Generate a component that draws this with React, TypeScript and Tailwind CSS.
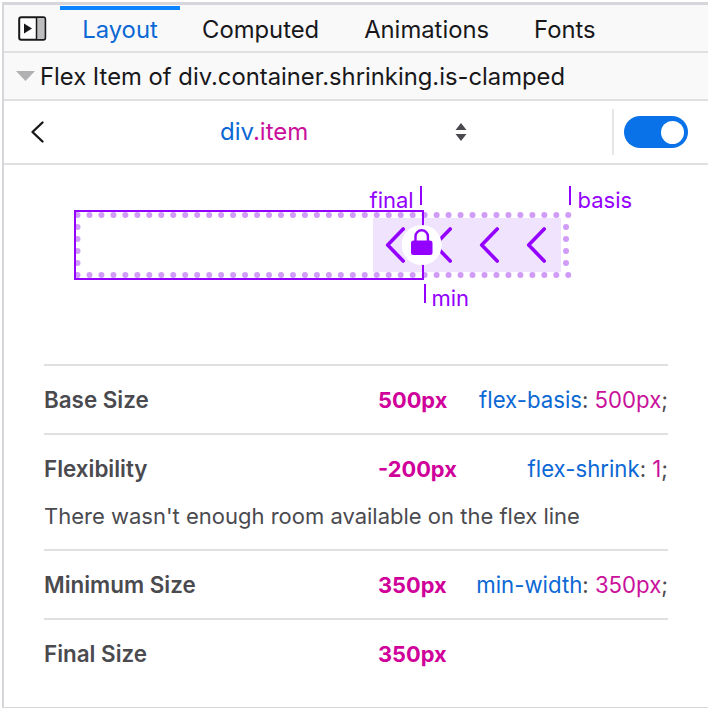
const font = { fontFamily: "Inter, 'Liberation Sans', sans-serif" };

function Prop({ name, value }: { name: string; value: string }) {
  return (
    <span className="ml-auto text-[22.2px] text-[#4a4a4f]">
      <span className="text-[#0b68d4]">{name}</span>: <span className="text-[#c9119b]">{value}</span>;
    </span>
  );
}

function Row({ label, value, prop, border = true }: { label: string; value: string; prop?: [string, string]; border?: boolean }) {
  return (
    <div className={`flex h-[69px] items-center pt-[1px] ${border ? "border-t-2 border-[#e0e0e2]" : ""}`}>
      <span className="w-[334px] text-[22.4px] font-semibold text-[#4a4a4f]">{label}</span>
      <span className="text-[21.8px] font-bold text-[#d0009a]">{value}</span>
      {prop && <Prop name={prop[0]} value={prop[1]} />}
    </div>
  );
}

function Diagram() {
  const topDots = Array.from({ length: 42 }, (_, i) => 77.5 + i * 11.97);
  const sideDots = [227, 239, 251, 263];
  const purple = "#9400ff";
  return (
    <div className="relative h-[199px] w-full">
      {/* svg coordinates are page coordinates, this box starts at 4,165 */}
      <svg width="704" height="199" viewBox="4 165 704 199" className="absolute left-0 top-0">
        <rect x="373" y="218" width="188" height="54" fill="#f0e3fd" />
        {topDots.map((x) => (
          <g key={x} fill="#d09cf8">
            <circle cx={x} cy="215" r="3" />
            <circle cx={x} cy="275" r="3" />
          </g>
        ))}
        {sideDots.map((y) => (
          <g key={y} fill="#d09cf8">
            <circle cx="77.5" cy={y} r="3" />
            <circle cx="566" cy={y} r="3" />
          </g>
        ))}
        <rect x="75" y="211" width="348" height="68" fill="none" stroke={purple} strokeWidth="2" />
        {[387.7, 434.7, 481.7, 528.7].map((x) => (
          <path key={x} d={`M${x + 15.5} 229 L${x} 245 L${x + 15.5} 261`} fill="none" stroke={purple} strokeWidth="3.6" strokeLinecap="round" strokeLinejoin="round" />
        ))}
        <circle cx="421.7" cy="245" r="20" fill="#fff" />
        <path d="M415.5 241 v-4.5 a6.2 6.2 0 0 1 12.4 0 v4.5" fill="none" stroke={purple} strokeWidth="2.4" />
        <rect x="411" y="240.5" width="21.5" height="14.5" rx="2.5" fill={purple} />
        <path d="M421 186v19M570 186v19M425 284v19" stroke={purple} strokeWidth="2" />
      </svg>
      <span className="absolute left-[365.5px] top-[20px] text-[22px] leading-[30px] text-[#9400ff]">final</span>
      <span className="absolute left-[573.5px] top-[20px] text-[22px] leading-[30px] text-[#9400ff]">basis</span>
      <span className="absolute left-[427.5px] top-[118px] text-[22px] leading-[30px] text-[#9400ff]">min</span>
    </div>
  );
}

export default function App() {
  return (
    <div className="h-[708px] w-[708px] overflow-hidden bg-white pl-[2px] pt-[2px]" style={font}>
      <div className="flex h-[706px] flex-col border-b border-l-2 border-t-[3px] border-[#d7d7db]">
        {/* tabs */}
        <div className="flex h-[48px] shrink-0 border-b-2 border-[#e0e0e2] bg-[#f9f9fa] pl-[14px]">
          <svg width="30" height="26" viewBox="0 0 30 26" className="mt-[11px] shrink-0">
            <rect x="1.2" y="1.2" width="26" height="22.5" rx="2" fill="#fff" stroke="#18181a" strokeWidth="2" />
            <rect x="19" y="2.2" width="7.5" height="20.5" fill="#bdbdbf" />
            <path d="M18.5 2v21" stroke="#18181a" strokeWidth="1.5" />
            <path d="M6 7.5v10l8-5z" fill="#18181a" />
          </svg>
          <div className="ml-[12px] flex text-[23.8px]">
            <div className="mt-[1px] mr-[-0.5px] flex h-[45px] w-[120px] items-center justify-center border-t-[4px] border-[#0a84ff] pb-[2px] text-[#0b68d4]">Layout</div>
            {["Computed", "Animations", "Fonts"].map((t) => (
              <div key={t} className="flex items-center px-[22.5px] pt-[3px] text-[#18181a]">{t}</div>
            ))}
          </div>
        </div>

        {/* accordion header */}
        <div className="flex h-[48px] shrink-0 items-center border-b-2 border-[#e0e0e2] bg-[#f9f9fa] pl-[12px] pt-[2px] text-[23.8px] text-[#18181a]">
          <svg width="20" height="10" viewBox="0 0 20 10" className="mr-[4px] mt-[-2px] shrink-0">
            <path d="M0 0h19l-9.5 10z" fill="#b1b1b3" />
          </svg>
          Flex Item of div.container.shrinking.is-clamped
        </div>

        {/* item selector */}
        <div className="relative flex h-[64px] shrink-0 items-center border-b-2 border-[#e0e0e2] pl-[25px]">
          <svg width="16" height="24" viewBox="0 0 16 24" className="shrink-0">
            <path d="M13.5 2.5 L3.5 12 L13.5 21.5" fill="none" stroke="#18181a" strokeWidth="2.4" strokeLinecap="round" strokeLinejoin="round" />
          </svg>
          <span className="ml-[175px] w-[234px] text-[24px] text-[#0b68d4]">
            div<span className="text-[#c9119b]">.item</span>
          </span>
          <svg width="14" height="20" viewBox="0 0 14 20" className="shrink-0">
            <path d="M7 1l5.5 7h-11zM7 19l-5.5-7h11z" fill="#4a4a4f" />
          </svg>
          <div className="ml-[144px] h-[46px] w-[2px] bg-[#e6e6e8]" />
          <div className="ml-[10px] flex h-[32px] w-[64px] items-center justify-end rounded-full bg-[#0a72e8] pr-[4.5px]">
            <div className="h-[23px] w-[23px] rounded-full bg-white" />
          </div>
        </div>

        <Diagram />

        {/* sizes */}
        <div className="mx-[40px] flex-1">
          <Row label="Base Size" value="500px" prop={["flex-basis", "500px"]} />
          <Row label="Flexibility" value="-200px" prop={["flex-shrink", "1"]} />
          <p className="-mt-[1px] h-[48px] text-[22px] leading-[30px] text-[#4a4a4f]">There wasn't enough room available on the flex line</p>
          <Row label="Minimum Size" value="350px" prop={["min-width", "350px"]} />
          <Row label="Final Size" value="350px" />
        </div>
      </div>
    </div>
  );
}
